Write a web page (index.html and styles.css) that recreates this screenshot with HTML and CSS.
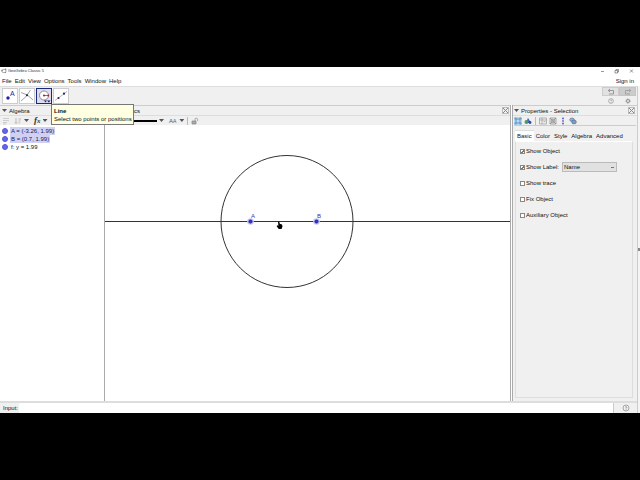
FILE: index.html
```html
<!DOCTYPE html>
<html lang="en">
<head>
  <meta charset="UTF-8" />
  <meta name="viewport" content="width=device-width, initial-scale=1" />
  <title>GeoGebra Classic 5</title>
  <link rel="stylesheet" href="styles.css">
</head>
<body>
  <div class="window">
    <header class="titlebar">
      <svg class="logo" viewBox="0 0 6 6"><ellipse cx="3" cy="3" rx="2.2" ry="1.7" fill="none" stroke="#777" stroke-width=".6"/><circle cx="1" cy="2.6" r=".8" fill="#888"/><circle cx="4.6" cy="1.4" r=".8" fill="#888"/><circle cx="4.4" cy="4.4" r=".7" fill="#888"/></svg>
      <span class="app-name">GeoGebra Classic 5</span>
      <svg class="window-controls" viewBox="0 0 36 8" fill="none" stroke="#555" stroke-width=".6">
        <path d="M1 4.5h3M15 3.5h2.5v2.5H15zM16 3.5v-1h2.5V5h-1M30 2.5l3 3M33 2.5l-3 3"/>
      </svg>
    </header>

    <nav class="menubar">
      <a href="#">File</a>
      <a href="#">Edit</a>
      <a href="#">View</a>
      <a href="#">Options</a>
      <a href="#">Tools</a>
      <a href="#">Window</a>
      <a href="#">Help</a>
      <a href="#" class="sign-in">Sign in</a>
    </nav>

    <div class="app">
      <div class="main">
        <div class="toolbar">
          <button class="tool" aria-label="Point">
            <svg viewBox="0 0 14 14"><circle cx="5" cy="9" r="1.7" fill="#2222a8"/><text x="7" y="7" class="tool-letter">A</text></svg>
          </button>
          <button class="tool" aria-label="Intersect">
            <svg viewBox="0 0 14 14" fill="none" stroke="#777" stroke-width=".7"><path d="M1 3.5Q8 5 13 11M1 12Q6 9 10.5 1"/><circle cx="7" cy="6.3" r="1" fill="#222" stroke="none"/></svg>
          </button>
          <button class="tool selected" aria-label="Circle">
            <svg viewBox="0 0 14 14"><circle cx="7" cy="6.5" r="4.5" fill="#fff" stroke="#666" stroke-width=".7"/><path d="M7 6.5h4.500" stroke="#c22" stroke-width=".8"/><circle cx="7" cy="6.5" r="1.1" fill="#b22"/><circle cx="11.3" cy="6.5" r=".9" fill="#b22"/><path d="M7 11.5h3l-1.5 2zM10 11.5h3.5l-1.7 2z" fill="#1c2060"/></svg>
          </button>
          <button class="tool" aria-label="Line">
            <svg viewBox="0 0 14 14"><path d="M1 11.5L13 2.5" stroke="#999" stroke-width=".7"/><circle cx="4.5" cy="9" r="1.1" fill="#222260"/><circle cx="10" cy="4.7" r="1.1" fill="#222260"/></svg>
          </button>
          <div class="tool-actions">
            <button class="undo" aria-label="Undo"><svg viewBox="0 0 8 8" fill="none" stroke="#888" stroke-width=".8"><path d="M3 1L1.3 2.5 3 4M1.3 2.5H6.5V6H2"/></svg></button>
            <button class="redo" aria-label="Redo"><svg viewBox="0 0 8 8" fill="none" stroke="#999" stroke-width=".8"><path d="M5 1l1.7 1.5L5 4M6.7 2.5H1.5V6H6"/></svg></button>
            <button class="plain" aria-label="Help"><svg viewBox="0 0 8 8" fill="none" stroke="#888" stroke-width=".6"><circle cx="4" cy="4" r="2.4"/><path d="M3.2 3.2q.8-1 1.5 0 0 .5-.7 1v.3M4 5v.5"/></svg></button>
            <button class="plain" aria-label="Settings"><svg viewBox="0 0 8 8" fill="none" stroke="#888"><circle cx="4" cy="4" r="1.5" stroke-width=".9"/><circle cx="4" cy="4" r="2.3" stroke-width=".7" stroke-dasharray=".9 .9"/></svg></button>
          </div>
          <div class="tooltip" role="tooltip">
            <b>Line</b>
            <span>Select two points or positions</span>
          </div>
        </div>

        <div class="panels">
          <section class="panel">
            <h2 class="panel-title"><i class="arrow"></i>Algebra</h2>
            <div class="stylebar">
              <svg class="icon" viewBox="0 0 8 8" stroke="#bbb" stroke-width=".7"><path d="M1 1.5h6M1 3.5h6M1 5.5h4M1 7h3"/></svg>
              <svg class="icon push" viewBox="0 0 8 8" fill="none" stroke="#aaa" stroke-width=".8"><path d="M2 1v5.5M.8 5.3L2 6.5l1.2-1.2M4.5 2h2.5M4.5 4h2M4.5 6H6"/></svg>
              <i class="arrow"></i>
              <span class="fx">f<small>x</small></span>
              <i class="arrow"></i>
            </div>
            <ul class="objects">
              <li class="marked"><i class="dot"></i><span>A = (-3.26, 1.99)</span></li>
              <li class="marked"><i class="dot"></i><span>B = (0.7, 1.99)</span></li>
              <li><i class="dot"></i><span>f: y = 1.99</span></li>
            </ul>
          </section>

          <section class="panel graphics">
            <h2 class="panel-title"><i class="arrow"></i>Graphics<button class="close" aria-label="Close Graphics"></button></h2>
            <div class="stylebar graphics-bar">
              <i class="stroke-sample"></i>
              <i class="arrow"></i>
              <span class="label-style">A<small>A</small></span>
              <i class="arrow"></i>
              <i class="separator"></i>
              <svg class="icon" viewBox="0 0 8 8" fill="none" stroke="#888" stroke-width=".7"><path d="M1 4h4v3H1z" fill="#aaa"/><path d="M4 4V2.5q0-1.3 1.3-1.3T6.6 2.500V4"/></svg>
            </div>
            <svg class="canvas">
              <circle cx="182" cy="96.5" r="66" class="curve"/>
              <line x1="0" y1="96.5" x2="100%" y2="96.5" class="curve"/>
              <circle cx="145.5" cy="96.5" r="3.3" class="halo"/>
              <circle cx="145.5" cy="96.5" r="1.8" class="point"/>
              <circle cx="211.5" cy="96.5" r="3.3" class="halo"/>
              <circle cx="211.5" cy="96.5" r="1.8" class="point"/>
              <text x="146" y="93" class="point-name">A</text>
              <text x="212" y="93" class="point-name">B</text>
              <path d="M173 96.500h1.2l.6 2.3 2.2.6.5 2-1 2.6h-2.8l-2-2.8.5-.9 1.2.4z"/>
            </svg>
          </section>

          <section class="panel properties">
            <h2 class="panel-title"><i class="arrow"></i>Properties - Selection<button class="close" aria-label="Close Properties"></button></h2>
            <div class="stylebar property-icons">
              <svg class="icon on" viewBox="0 0 8 8" fill="none" stroke="#3e719c" stroke-width=".7"><path d="M2 2h4v4H2z"/><path d="M1 1h1.5M5.5 1H7M1 7h1.5M5.5 7H7M1 1v1.5M7 1v1.5M1 5.5V7M7 5.5V7"/></svg>
              <svg class="icon" viewBox="0 0 8 8"><path d="M4 .8L7 6H2z" fill="#4466b8"/><circle cx="2.5" cy="5" r="2" fill="#4c9970"/><circle cx="6" cy="5.5" r="1.4" fill="#3344a0"/></svg>
              <i class="separator"></i>
              <svg class="icon" viewBox="0 0 8 8" fill="none" stroke="#999" stroke-width=".7"><path d="M.5 1h7v6h-7zM.5 3h7M3 1v6M4.5 4.7h2"/></svg>
              <svg class="icon" viewBox="0 0 8 8" fill="none" stroke="#777" stroke-width=".6"><path d="M1 1h6v6H1zM1 1l6 6M7 1L1 7"/><circle cx="4" cy="4" r="1.8"/></svg>
              <svg class="icon" viewBox="0 0 8 8"><path d="M4 1v6" stroke="#77c" stroke-width=".6"/><circle cx="4" cy="1.3" r=".8" fill="#33b"/><circle cx="4" cy="4" r=".7" fill="#33b"/><circle cx="4" cy="6.8" r=".8" fill="#33b"/></svg>
              <svg class="icon" viewBox="0 0 8 8" stroke="#557" stroke-width=".5"><ellipse cx="3" cy="2.7" rx="2.3" ry="1.7" fill="#8ab4dc"/><ellipse cx="5" cy="5" rx="2.4" ry="2" fill="#7a9ccc"/></svg>
            </div>
            <div class="property-body">
              <div class="tabs" role="tablist">
                <button class="tab active" role="tab">Basic</button>
                <button class="tab" role="tab">Color</button>
                <button class="tab" role="tab">Style</button>
                <button class="tab" role="tab">Algebra</button>
                <button class="tab" role="tab">Advanced</button>
              </div>
              <form class="options">
                <div class="option"><input type="checkbox" id="showObject" checked><label for="showObject">Show Object</label></div>
                <div class="option">
                  <input type="checkbox" id="showLabel" checked><label for="showLabel">Show Label:</label>
                  <select id="labelMode" aria-label="Label">
                    <option>Name</option>
                    <option>Name &amp; Value</option>
                    <option>Value</option>
                  </select>
                </div>
                <div class="option"><input type="checkbox" id="showTrace"><label for="showTrace">Show trace</label></div>
                <div class="option"><input type="checkbox" id="fixObject"><label for="fixObject">Fix Object</label></div>
                <div class="option"><input type="checkbox" id="auxObject"><label for="auxObject">Auxiliary Object</label></div>
              </form>
            </div>
          </section>
        </div>

        <div class="inputbar">
          <label for="command">Input:</label>
          <input type="text" id="command">
          <button class="input-help" aria-label="Input help"><svg viewBox="0 0 8 8" fill="none" stroke="#888" stroke-width=".7"><circle cx="4" cy="4" r="3"/><path d="M3 3.2q1-1.2 2 0-.2.6-1 1v.5M4 5.3v.7"/></svg></button>
        </div>
      </div>
      <div class="edge"><i></i></div>
    </div>
  </div>
</body>
</html>
```
FILE: styles.css
```css
* {
  box-sizing: border-box;
}

body {
  margin: 0;
  height: 100vh;
  padding: 67px 0;
  background: #000;
  color: #111;
  font: 6px/8px "Liberation Sans", Arial, sans-serif;
}

button,
input,
select {
  margin: 0;
  padding: 0;
  border: 0;
  font: inherit;
  color: inherit;
  background: none;
}

svg {
  display: block;
}

.window {
  display: flex;
  flex-direction: column;
  height: 100%;
  background: #fff;
}

/* title and menu */
.titlebar {
  display: flex;
  align-items: center;
  height: 8px;
  padding: 0 4px 0 1px;
}

.logo {
  width: 6px;
  height: 6px;
}

.app-name {
  margin-left: 1px;
  font-size: 4px;
  color: #333;
}

.window-controls {
  width: 36px;
  height: 8px;
  margin-left: auto;
}

.menubar {
  display: flex;
  align-items: center;
  gap: 3px;
  height: 11px;
  padding: 0 6px 0 2px;
}

.menubar a {
  color: inherit;
  text-decoration: none;
}

.menubar .sign-in {
  margin-left: auto;
}

.app {
  display: flex;
  flex: 1;
  min-height: 0;
}

.main {
  display: flex;
  flex: 1;
  flex-direction: column;
  min-width: 0;
}

.edge {
  display: flex;
  align-items: center;
  width: 3px;
  border-left: 1px solid #ccc;
  background: #f4f4f4;
}

.edge i {
  width: 2px;
  height: 3px;
  background: #888;
}

/* toolbar */
.toolbar {
  position: relative;
  display: flex;
  align-items: center;
  gap: 1px;
  height: 19px;
  padding: 0 1px 0 2px;
  border-top: 1px solid #ddd;
  background: #f0f0f0;
}

.tool {
  width: 16px;
  height: 16px;
  border: 1px solid #ccc;
  background: #fff;
}

.tool.selected {
  border: 1px solid #1c2878;
  background: #dcdcf4;
}

.tool-letter {
  font-size: 7px;
  fill: #2222a8;
}

.tool-actions {
  display: grid;
  grid-template-columns: 17px 17px;
  grid-template-rows: 9px 9px;
  margin-left: auto;
}

.tool-actions button {
  display: flex;
  align-items: center;
  justify-content: center;
}

.tool-actions svg {
  width: 8px;
  height: 8px;
}

.undo {
  border: 1px solid #ccc;
  background: #e1e1e1;
}

.redo {
  border: 1px solid #c4c4c4;
  background: #ccc;
}

.tooltip {
  position: absolute;
  top: 17px;
  left: 51px;
  z-index: 1;
  display: flex;
  flex-direction: column;
  padding: 2px 1px 1px 2px;
  border: 1px solid #777;
  background: #ffffe1;
  white-space: nowrap;
}

/* panels */
.panels {
  display: grid;
  grid-template-columns: 105px 1fr 126px;
  flex: 1;
  min-height: 0;
  border-bottom: 2px solid #ddd;
}

.panel {
  display: flex;
  flex-direction: column;
  min-width: 0;
  border-right: 1px solid #aaa;
}

.panel-title {
  display: flex;
  align-items: center;
  gap: 2px;
  height: 10px;
  margin: 0;
  padding: 0 2px;
  border-top: 1px solid #ccc;
  background: #f0f0f0;
  font-size: 6px;
  font-weight: normal;
}

.arrow {
  width: 5px;
  height: 3px;
  background: #555;
  clip-path: polygon(0 0, 100% 0, 50% 100%);
}

.close {
  width: 7px;
  height: 7px;
  margin-left: auto;
  border: 1px solid #bbb;
  background:
    linear-gradient(45deg, transparent 43%, #888 43% 57%, transparent 57%),
    linear-gradient(-45deg, transparent 43%, #888 43% 57%, transparent 57%);
}

.stylebar {
  display: flex;
  align-items: center;
  gap: 2px;
  height: 10px;
  padding: 0 2px;
  border-top: 1px solid #ddd;
  background: #f0f0f0;
}

.icon {
  width: 8px;
  height: 8px;
}

.push {
  margin-left: 2px;
}

.fx {
  margin-left: 3px;
  color: #333;
  font: italic bold 9px/8px "Liberation Serif", serif;
}

.fx small {
  font-size: 7px;
}

.label-style small {
  font-size: 5px;
}

.objects {
  flex: 1;
  margin: 0;
  padding: 2px;
  list-style: none;
}

.objects li {
  display: flex;
  align-items: center;
  gap: 2px;
  height: 8px;
}

.objects span {
  padding: 0 1px;
}

.dot {
  width: 6px;
  height: 6px;
  border: 1px solid #5858d0;
  border-radius: 50%;
  background: #6464f0;
}

.marked span {
  color: #1a1a50;
  background: #d0d0f4;
}

.graphics .panel-title {
  padding: 0 1px 0 4px;
}

.graphics-bar {
  padding-left: 1px;
}

.stroke-sample {
  width: 51px;
  height: 2px;
  background: #000;
}

.label-style {
  margin: 0 1px 0 3px;
  color: #555;
}

.separator {
  width: 1px;
  height: 8px;
  margin: 0 1px;
  background: #bbb;
}

.canvas {
  flex: 1;
  width: 100%;
  min-height: 0;
}

.curve {
  fill: none;
  stroke: #333;
  stroke-width: 1;
}

.halo {
  fill: #c8c8f8;
}

.point {
  fill: #3333c0;
  stroke: #222288;
  stroke-width: .5;
}

.point-name {
  font-size: 6px;
  fill: #3333b0;
}

/* properties */
.properties {
  margin-left: 1px;
  border-left: 1px solid #aaa;
  border-right: 0;
  background: #f0f0f0;
}

.properties .panel-title {
  padding-left: 1px;
}

.property-icons {
  padding: 0 1px;
}

.property-icons .on {
  background: #b8dcf8;
}

.property-body {
  display: flex;
  flex: 1;
  flex-direction: column;
  margin: 0 1px;
  padding: 4px 3px 3px 1px;
  border-top: 1px solid #ccc;
}

.tabs {
  display: flex;
}

.tab {
  height: 11px;
  padding: 0 2px;
}

.tab.active {
  border-top: 1px solid #ddd;
  background: #fff;
}

.options {
  display: flex;
  flex: 1;
  flex-direction: column;
  gap: 6px;
  padding: 4px;
  border: 1px solid #ddd;
  border-top: 1px solid #fff;
}

.option {
  display: flex;
  align-items: center;
  gap: 1px;
  height: 10px;
}

.option input {
  appearance: none;
  width: 5px;
  height: 5px;
  border: 1px solid #888;
  background: #fff;
}

.option input:checked {
  background: linear-gradient(-45deg, #fff 30%, #777 30% 60%, #fff 60%);
}

.option select {
  appearance: none;
  width: 55px;
  height: 10px;
  margin-left: 2px;
  padding: 0 1px;
  border: 1px solid #bbb;
  background:
    linear-gradient(#777, #777) right 2px center / 3px 1px no-repeat,
    #e1e1e1;
}

/* input bar */
.inputbar {
  display: flex;
  align-items: center;
  height: 10px;
  background: #f0f0f0;
}

.inputbar label {
  width: 19px;
  padding-left: 3px;
}

.inputbar input {
  flex: 1;
  min-width: 0;
  height: 10px;
  background: #fff;
}

.input-help {
  display: flex;
  align-items: center;
  justify-content: center;
  width: 24px;
  height: 10px;
  border-left: 1px solid #ccc;
}

.input-help svg {
  width: 8px;
  height: 8px;
}
```
